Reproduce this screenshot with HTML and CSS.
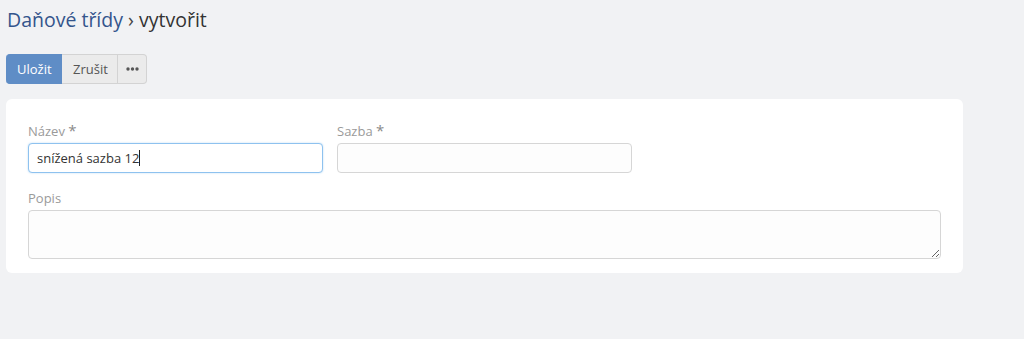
FILE: index.html
```html
<!DOCTYPE html>
<html lang="cs">
<head>
  <meta charset="UTF-8" />
  <meta name="viewport" content="width=device-width, initial-scale=1.0" />
  <title>Daňové třídy | vytvořit</title>
  <link rel="stylesheet" href="styles.css">
</head>
<body>
  <div class="page">
    <h1 class="page-title"><a href="#">Daňové třídy</a> <span class="sep">›</span> vytvořit</h1>

    <div class="toolbar">
      <button class="btn btn-primary" type="button">Uložit</button>
      <button class="btn" type="button">Zrušit</button>
      <button class="btn btn-more" type="button" aria-label="Další">
        <svg width="13" height="4" viewBox="0 0 13 4"><circle cx="2" cy="2" r="1.7" fill="#555"/><circle cx="6.5" cy="2" r="1.7" fill="#555"/><circle cx="11" cy="2" r="1.7" fill="#555"/></svg>
      </button>
    </div>

    <form class="panel">
      <div class="field">
        <label for="name">Název <span class="req">*</span></label>
        <div class="input focused" id="name">snížená sazba 12<span class="caret"></span></div>
      </div>
      <div class="field">
        <label for="rate">Sazba <span class="req">*</span></label>
        <input class="input" id="rate" type="text">
      </div>
      <div class="field wide">
        <label for="desc">Popis</label>
        <textarea class="input textarea" id="desc"></textarea>
      </div>
    </form>
  </div>
</body>
</html>
```

FILE: styles.css
```css
*,*::before,*::after{box-sizing:border-box;margin:0;padding:0;}
body{
  font-family:'Open Sans', 'Liberation Sans', sans-serif;
  background:#f1f2f4;
  color:#333;
  font-size:13px;
}
.page{
  width:969px;
  padding:6px 6px 0;
}
.page-title{
  font-size:19.5px;
  font-weight:400;
  line-height:28px;
  color:#333;
  padding-left:1px;
}
.page-title a{color:#34558c;text-decoration:none;}
.page-title .sep{color:#444;}
.toolbar{
  display:flex;
  margin:20px 0 15px;
}
.btn{
  font-family:inherit;
  font-size:13px;
  height:30px;
  padding:0 11px;
  background:#ebebeb;
  color:#555;
  border:1px solid #d3d3d3;
  border-left:none;
  cursor:pointer;
}
.btn-primary{
  background:#5f8dc6;
  border-color:#5f8dc6;
  color:#fff;
  border-radius:4px 0 0 4px;
  width:56px;
}
.btn-primary + .btn{width:56px;}
.btn-more{
  width:29px;
  padding:0;
  border-radius:0 4px 4px 0;
  display:flex;align-items:center;justify-content:center;
}
.panel{
  background:#fff;
  border-radius:6px;
  padding:23px 22px 14px;
  display:grid;
  grid-template-columns:repeat(3,1fr);
  column-gap:14px;
  row-gap:16px;
}
.field label{
  display:block;
  color:#9a9a9a;
  line-height:18px;
  margin-bottom:3px;
}
.req{color:#8a8a8a;font-size:15px;line-height:10px;}
.field.wide{grid-column:1 / -1;}
.input{
  display:block;
  width:100%;
  height:30px;
  border:1px solid #d6d6d6;
  border-radius:4px;
  background:#fdfdfd;
  font-family:inherit;
  font-size:13px;
  color:#333;
  padding:0 8px;
  line-height:28px;
}
.input.focused{
  border-color:#8ec2ef;
  box-shadow:0 0 2px rgba(102,175,233,.45);
  background:#fff;
}
.caret{
  display:inline-block;
  width:1px;height:16px;
  background:#222;
  vertical-align:-3px;
}
.textarea{
  height:49px;
  resize:vertical;
  padding:6px 8px;
}
```
